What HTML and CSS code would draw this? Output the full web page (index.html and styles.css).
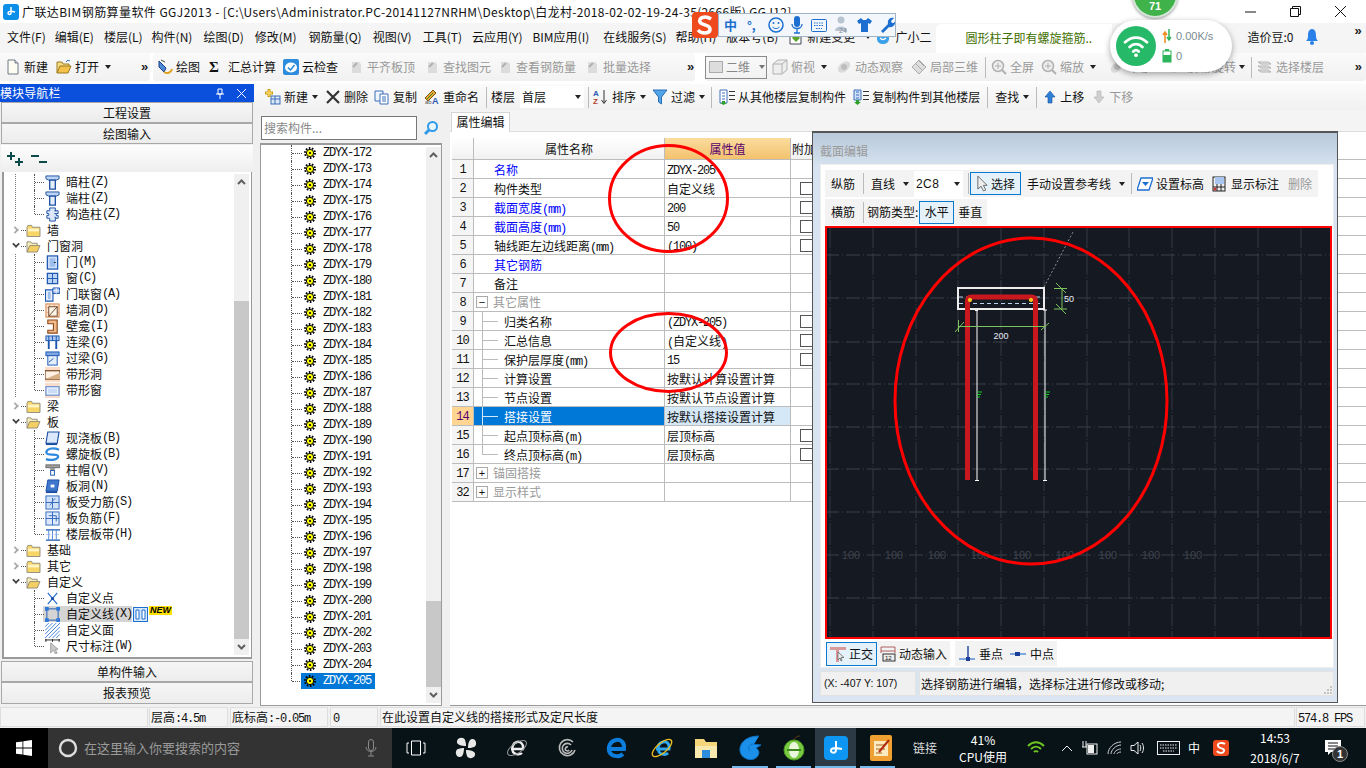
FILE: index.html
```html
<!DOCTYPE html>
<html lang="zh">
<head>
<meta charset="utf-8">
<title>广联达BIM钢筋算量软件</title>
<link rel="stylesheet" href="styles.css">
</head>
<body>
<svg class="defs" width="0" height="0">
<defs>
<symbol id="gear" viewBox="0 0 12 12"><circle cx="6" cy="6" r="5" fill="none" stroke="#000" stroke-width="2" stroke-dasharray="1.6 1.5"/><circle cx="6" cy="6" r="3.6" fill="#ff0" stroke="#000"/><circle cx="6" cy="6" r="1.1" fill="#000"/></symbol>
<symbol id="folder" viewBox="0 0 16 14"><path d="M1 3.5 2 1.5h4l1 2h8v10H1z" fill="#f7d668" stroke="#8f8a7c"/><path d="M2 5h12v3H2z" fill="#fdf3c3"/></symbol>
<symbol id="folderopen" viewBox="0 0 16 14"><path d="M1 13V2h4l1 1.5h6V6" fill="#fbeeb8" stroke="#8f8a7c"/><path d="M1 13 4 6h11l-3 7z" fill="#f5cf62" stroke="#8f8a7c"/></symbol>
<symbol id="tcol" viewBox="0 0 16 16"><path d="M1 1h14v3l-3 1.500H4L1 4z" fill="#bcd4f4" stroke="#1b4ea3"/><path d="M5 5.500h6V15H5z" fill="#e6f0fc" stroke="#1b4ea3" stroke-width="1.400"/></symbol>
<symbol id="gz" viewBox="0 0 16 16"><path d="M5 1h6v3h3v3h-2v2h2v3h-3v3H5v-3H2V9h2V7H2V4h3z" fill="#dce8fa" stroke="#1b4ea3"/><path d="M10 4h2M10 7h2M10 11h2" stroke="#1b4ea3"/></symbol>
<symbol id="door" viewBox="0 0 16 16"><rect x="2.500" y="1" width="11" height="14" fill="#cfe0f8" stroke="#1b55b0" stroke-width="1.300"/><rect x="5" y="3.500" width="6" height="9" fill="#9dbdec"/><path d="M9.500 8h2" stroke="#123"/></symbol>
<symbol id="win" viewBox="0 0 16 16"><rect x="2.500" y="2.500" width="11" height="11" fill="#bcd4f4" stroke="#1b55b0" stroke-width="1.300"/><path d="M8 2.500v11M2.500 8h11" stroke="#1b55b0"/></symbol>
<symbol id="doorwin" viewBox="0 0 16 16"><path d="M.5 3h8v12h-8z" fill="#eaf2fd" stroke="#1b55b0" stroke-width="1.200"/><path d="M8.500 1h7v6h-7z" fill="#a9c6f0" stroke="#1b55b0"/><path d="M12 1v6M8.500 4h7" stroke="#eef"/><rect x="3" y="5" width="3" height="8" fill="#9dbdec"/></symbol>
<symbol id="hole" viewBox="0 0 16 16"><rect x="1" y="1" width="14" height="14" fill="#fbe6d6" stroke="#d07c3c"/><path d="M1 5h14M1 10h14M5 1v14M10 1v14" stroke="#e8a97a"/><rect x="4" y="4" width="9" height="10" fill="#fdf4e8" stroke="#6b4423"/><path d="M4 14 13 4" stroke="#6b4423"/></symbol>
<symbol id="niche" viewBox="0 0 16 16"><path d="M3 1h10v14H3v-3h6V5H3z" fill="#f2b98a" stroke="#8a4a18" stroke-width="1.200"/></symbol>
<symbol id="ll" viewBox="0 0 16 16"><rect x="1" y="1" width="14" height="5" fill="#a9c6f0" stroke="#1b55b0"/><path d="M4 1v5M8 1v5M12 1v5" stroke="#1b55b0"/><path d="M4 6v9M12 6v9" stroke="#1b55b0" stroke-width="2"/></symbol>
<symbol id="gl" viewBox="0 0 16 16"><rect x="1" y="1" width="14" height="4" fill="#7ea8e4" stroke="#1b55b0"/><rect x="3" y="5" width="10" height="10" fill="#e4eefb" stroke="#1b55b0"/><path d="M4 12 9 8" stroke="#1b55b0"/></symbol>
<symbol id="dxd" viewBox="0 0 16 16"><rect width="16" height="16" fill="#fbdcc8"/><rect x="0" y="4" width="16" height="9" fill="#fff2e4" stroke="#6b3a14" stroke-width="1.200"/><path d="M0 13 16 6v7z" fill="#d8b088"/></symbol>
<symbol id="dxc" viewBox="0 0 16 16"><rect width="16" height="16" fill="#fbdcc8"/><rect x="1" y="4" width="14" height="9" fill="#f0f5ff" stroke="#5f8ad0" stroke-width="1.200"/><rect x="3" y="6" width="10" height="5" fill="#c9dcf8"/></symbol>
<symbol id="slab" viewBox="0 0 16 16"><path d="M3 1h12l-2 12H1z" fill="#dbe8fb" stroke="#1b4ea3" stroke-width="1.200"/><path d="M1 13h12v2H1z" fill="#1b4ea3"/></symbol>
<symbol id="spiral" viewBox="0 0 16 16"><path d="M15 3C8 0 1 2 1.500 6 2 10 14 6 14 10c0 3-7 5-13 3" fill="none" stroke="#2e8ae0" stroke-width="2.400"/></symbol>
<symbol id="cap" viewBox="0 0 16 16"><rect x="1" y="2" width="15" height="3" fill="#a0a0a0" stroke="#666"/><path d="M5 5h6l-1 3H6z" fill="#999"/><rect x="6" y="8" width="4" height="5" fill="#fff" stroke="#1b55b0"/></symbol>
<symbol id="bd" viewBox="0 0 16 16"><path d="M3 1h12l-2 12H1z" fill="#3f78cc" stroke="#1b4ea3"/><path d="M1 13h12v2H1z" fill="#1b4ea3"/><rect x="6" y="6" width="4" height="3" fill="#fff"/></symbol>
<symbol id="sl" viewBox="0 0 16 16"><rect x="1" y="1" width="14" height="14" fill="#cfe0f8" stroke="#2e66bc"/><path d="M1 8h14M8 3v11" stroke="#2e66bc"/><path d="M11 4C8 4 8 9 5 11" fill="none" stroke="#2e66bc"/></symbol>
<symbol id="fj" viewBox="0 0 16 16"><rect x="1" y="1" width="14" height="14" fill="#dde9fb" stroke="#2e66bc"/><path d="M1 8h14M8 1v14M4 5h8v6" fill="none" stroke="#2e66bc"/></symbol>
<symbol id="lc" viewBox="0 0 16 16"><path d="M1 3h15M1 14h15" stroke="#1b55b0" stroke-width="1.400"/><path d="M4 3v11M8 3v11M12 3v11" stroke="#4d86d6"/><path d="M1 8h15" stroke="#9dbdec" stroke-dasharray="2 1"/></symbol>
<symbol id="cdot" viewBox="0 0 16 16"><path d="M3 2 13 14M13 2 3 14" stroke="#2a6fd0" stroke-width="1.300"/><circle cx="8" cy="8" r="1.600" fill="#1b4ea3"/></symbol>
<symbol id="cline" viewBox="0 0 16 16"><rect x="2" y="2" width="12" height="12" fill="none" stroke="#1b55b0"/><path d="M0 0h4v4H0zM12 0h4v4h-4zM0 12h4v4H0zM12 12h4v4h-4z" fill="#2e78d8"/></symbol>
<symbol id="cface" viewBox="0 0 16 16"><path d="M0 4 4 0M0 8 8 0M0 12 12 0M0 16 16 0M4 16 16 4M8 16l8-8M12 16l4-4" stroke="#3d7fdc"/></symbol>
<symbol id="cdim" viewBox="0 0 16 16"><path d="M0 1h16M1 0v3M8 0v3M15 0v3" stroke="#222"/><path d="M6 4v11l3-3 2 4 2-1-2-4h3z" fill="#c8c8c8" stroke="#888" stroke-width=".7"/></symbol>
<symbol id="sp" viewBox="0 0 16 16"><path d="M4 3h7l2 2v9H4z" fill="#dcdcdc"/><path d="M5 8 9 4" stroke="#b0b0b0" stroke-width="2"/></symbol>
<symbol id="file" viewBox="0 0 16 16"><path d="M3 1h7l3 3v11H3z" fill="#fdfdf4" stroke="#707a86"/><path d="M10 1v3h3" fill="#dde" stroke="#707a86"/></symbol>
<symbol id="open" viewBox="0 0 16 16"><path d="M1 14V3h5l1 2h6v2" fill="#f8dc86" stroke="#9a7a22"/><path d="M1 14 4 7h11l-3 7z" fill="#f4c24a" stroke="#9a7a22"/><path d="M10 3c1-2 3-2 4-1" stroke="#2d6fbe" fill="none"/></symbol>
<symbol id="draw" viewBox="0 0 16 16"><path d="M2 2 9 9l-2 4-5-5z" fill="#4a8ad8" stroke="#1a3f80"/><path d="M7 13c3 2 7 1 8-3" fill="none" stroke="#e0a020" stroke-width="2"/><path d="M4 1l4 2" stroke="#444"/></symbol>
<symbol id="cloud" viewBox="0 0 16 16"><rect width="16" height="16" rx="2" fill="#2d8ddc"/><ellipse cx="8" cy="8.500" rx="6" ry="5" fill="#fff"/><path d="M5 8.500 7.500 11 11.500 6" fill="none" stroke="#2d8ddc" stroke-width="1.600"/></symbol>
<symbol id="combo" viewBox="0 0 16 16"><rect x="1.500" y="2.500" width="13" height="11" fill="#ddd" stroke="#aaa"/></symbol>
<symbol id="box3d" viewBox="0 0 16 16"><path d="M1 5 6 1h9v10l-5 4H1zM1 5h9v10M10 5l5-4" fill="#eee" stroke="#b0b0b0"/></symbol>
<symbol id="orb" viewBox="0 0 16 16"><ellipse cx="8" cy="8" rx="7" ry="4.500" transform="rotate(-40 8 8)" fill="#dadada"/><circle cx="8" cy="8" r="3" fill="#bdbdbd"/></symbol>
<symbol id="local" viewBox="0 0 16 16"><path d="M1 8 8 1l7 7-7 7z" fill="#ddd" stroke="#aaa"/><path d="M5 5l6 6M8 2l5 5" stroke="#aaa"/></symbol>
<symbol id="zoomf" viewBox="0 0 16 16"><circle cx="7" cy="7" r="5.500" fill="#eee" stroke="#b0b0b0" stroke-width="1.500"/><path d="M4 7h6M7 4v6" stroke="#b0b0b0"/><path d="M11 11l4 4" stroke="#b0b0b0" stroke-width="2"/></symbol>
<symbol id="layers" viewBox="0 0 16 16"><path d="M1 3h10l3 2H4zM1 7h10l3 2H4zM1 11h10l3 2H4z" fill="#ececec" stroke="#b0b0b0"/></symbol>
<symbol id="add" viewBox="0 0 16 16"><rect x="6" y="7" width="9" height="8" fill="#dce8f8" stroke="#3d6fb8"/><path d="M6 10h9M10 7v8" stroke="#3d6fb8"/><path d="M4 0v8M0 4h8" stroke="#c79a1a" stroke-width="3"/><path d="M4 1v6M1 4h6" stroke="#f6dc62" stroke-width="1.400"/></symbol>
<symbol id="copy" viewBox="0 0 16 16"><path d="M1 2h8v10H1z" fill="#eef4fd" stroke="#3d6fb8"/><path d="M6 5h8v10H6z" fill="#fff" stroke="#3d6fb8"/><path d="M8 8h4M8 10h4M8 12h4" stroke="#3d6fb8"/></symbol>
<symbol id="rename" viewBox="0 0 16 16"><path d="M1 9 9 1l3 3-8 8z" fill="#e6a832" stroke="#7a5510"/><path d="M3 10l6-6" stroke="#3a8a3a"/><text x="8" y="15" font-size="9" font-weight="700" fill="#2d5ab0" font-family="Liberation Sans">A</text><text x="1" y="15" font-size="6" fill="#555" font-family="Liberation Sans">ab</text></symbol>
<symbol id="sort" viewBox="0 0 16 16"><text x="0" y="7" font-size="8" font-weight="700" fill="#2d5ab0" font-family="Liberation Sans">A</text><text x="0" y="15" font-size="8" font-weight="700" fill="#b0402a" font-family="Liberation Sans">Z</text><path d="M11 1v13M8.500 11l2.500 3.500 2.500-3.500" fill="none" stroke="#333"/></symbol>
<symbol id="filter" viewBox="0 0 16 16"><path d="M1 1h14L9.500 8v7l-3-2V8z" fill="#52a4e8" stroke="#2a6fb4"/></symbol>
<symbol id="cp1" viewBox="0 0 16 16"><path d="M1 1h7v13H1z" fill="#fff" stroke="#3d6fb8"/><path d="M3 4h3M3 7h3M3 10h3" stroke="#3d6fb8"/><path d="M10 2h6v1h-6zM10 6h6v1h-6zM10 10h6v1h-6z" fill="#333"/><path d="M3 12h3v2h2l-3.500 2L1 14h2z" fill="#2ca02c"/></symbol>
<symbol id="cp2" viewBox="0 0 16 16"><path d="M1 1h7v10H1z" fill="#cfe0f8" stroke="#3d6fb8"/><path d="M3 3h3M3 6h3M3 9h3" stroke="#3d6fb8"/><path d="M10 2h6v1h-6zM10 6h6v1h-6zM10 10h6v1h-6z" fill="#333"/><path d="M3 11h3v2h2l-3.500 3L1 13h2z" fill="#2ca02c"/></symbol>
<symbol id="up" viewBox="0 0 14 14"><path d="M7 1 12 7H9v6H5V7H2z" fill="#2d7fd8" stroke="#1a4f9a" stroke-width=".6"/></symbol>
<symbol id="down" viewBox="0 0 14 14"><path d="M7 13 12 7H9V1H5v6H2z" fill="#d0d0d0" stroke="#b0b0b0" stroke-width=".6"/></symbol>
<symbol id="cursor" viewBox="0 0 14 18"><path d="M2 1v14l3.500-3 2.500 5 2.500-1-2.500-5H12z" fill="#eee" stroke="#666"/></symbol>
<symbol id="plane" viewBox="0 0 16 14"><path d="M4 1h12l-4 12H0z" fill="#fff" stroke="#1c6fd0" stroke-width="1.300"/><path d="M5 5h7l-3.500 4z" fill="#1c6fd0"/></symbol>
<symbol id="showdim" viewBox="0 0 14 16"><rect x="1" y="1" width="12" height="14" fill="#eee" stroke="#222"/><rect x="3" y="1" width="9" height="7" fill="#a9c6f0"/><path d="M1 11h12M5 8v7M9 8v7" stroke="#222"/><circle cx="3" cy="13" r="1.500" fill="#c33"/></symbol>
<symbol id="ortho" viewBox="0 0 18 18"><path d="M1 2h16v3H10v12H7V5H1z" fill="#d89a9a"/><path d="M9 7v8l2-2 1 3 1-.5-1-3h3z" fill="#eee" stroke="#555" stroke-width=".7"/></symbol>
<symbol id="dyn" viewBox="0 0 16 16"><path d="M1 1h14M1 1v6M15 1v6M1 5h14" fill="none" stroke="#b06060"/><rect x="3" y="8" width="12" height="7" fill="#eee" stroke="#333"/><text x="5" y="14" font-size="6" font-family="Liberation Sans" fill="#111">12</text></symbol>
<symbol id="perp" viewBox="0 0 18 18"><path d="M1 14h16" stroke="#7fa8dc" stroke-width="2"/><path d="M10 1v13" stroke="#1b3f9a" stroke-width="1.400"/><rect x="8" y="12" width="4" height="4" fill="#1b3f9a"/></symbol>
<symbol id="mid" viewBox="0 0 18 18"><path d="M1 9h16" stroke="#7fa8dc" stroke-width="2"/><rect x="6" y="7" width="5" height="4" fill="#1b3f9a"/></symbol>
</defs>
</svg>

<div class="app">
  <header class="title">
    <span class="applogo"><svg width="16" height="16" viewBox="0 0 16 16"><rect width="16" height="16" rx="3" fill="#0b8fe8"/><path d="M8 3v6c0 2-3 2-3 0s3-2 7-1" fill="none" stroke="#fff" stroke-width="1.500"/></svg></span>
    <span class="titletext"><span class="tt1">广联达BIM钢筋算量软件 GGJ2013 - </span><span class="tt2">[C:\Users\Administrator.PC-20141127NRHM\Desktop\白龙村-2018-02-02-19-24-35(2666版) GGJ12]</span></span>
    <span class="winbtns">
      <svg width="13" height="13" viewBox="0 0 13 13"><path d="M1 7h11" stroke="#111"/></svg>
      <svg width="13" height="13" viewBox="0 0 13 13"><path d="M1.500 3.500h8v8h-8zM3.500 3.500v-2h8v8h-2" fill="none" stroke="#111"/></svg>
      <svg width="13" height="13" viewBox="0 0 13 13"><path d="M1 1l11 11M12 1 1 12" stroke="#111"/></svg>
    </span>
  </header>

  <nav class="menu">
    <span class="r9">文件(F)</span><span>编辑(E)</span><span class="r9">楼层(L)</span><span class="r9">构件(N)</span><span class="mg r11">绘图(D)</span><span class="r12">修改(M)</span><span class="r11">钢筋量(Q)</span><span class="r11">视图(V)</span><span>工具(T)</span><span>云应用(Y)</span><span class="r14">BIM应用(I)</span><span class="r9">在线服务(S)</span><span>帮助(H)</span><span class="r9">版本号(B)</span>
    <span class="mitem"><svg width="16" height="16" viewBox="0 0 16 16"><path d="M3 1h8l3 3v11H3z" fill="#fff" stroke="#445"/><path d="M5 9l4-4 4 4-4 4z" fill="#5aa52a"/></svg>新建变更</span>
    <span class="mdd dd"></span>
    <span class="mitem xr"><svg width="16" height="16" viewBox="0 0 16 16"><path d="M2 3c4 1 8 1 12 0v7c0 3-3 5-6 5s-6-2-6-5z" fill="#3aa0ea"/><path d="M5 9c2 2 4 2 6 0" stroke="#fff" stroke-width="1.500" fill="none"/></svg>广小二</span>
    <div class="newsbar"><span class="news">圆形柱子即有螺旋箍筋..</span></div>
    <span class="bean">造价豆:0</span>
    <svg class="bell" width="12" height="18" viewBox="0 0 12 18"><path d="M6 1C3 1 2 4 2 8c0 3-1 4-2 5h12c-1-1-2-2-2-5 0-4-1-7-4-7z" fill="#2a7fe8"/><circle cx="6" cy="15" r="2" fill="#2a7fe8"/></svg>
    <span class="more topmore">»</span>
  </nav>

  <div class="tb1">
    <div class="grp g1">
      <span class="ti"><svg class="i"><use href="#file"/></svg>新建</span>
      <span class="ti m8"><svg class="i"><use href="#open"/></svg>打开</span>
      <span class="dd m6"></span>
      <span class="more m30">»</span>
    </div>
    <div class="grp g2">
      <span class="ti"><svg class="i"><use href="#draw"/></svg>绘图</span>
      <span class="sigma">Σ</span><span class="ti m9">汇总计算</span>
      <span class="ti m7"><svg class="i"><use href="#cloud"/></svg>云检查</span>
      <span class="ti m10 off"><svg class="i"><use href="#sp"/></svg>平齐板顶</span>
      <span class="ti m9 off"><svg class="i"><use href="#sp"/></svg>查找图元</span>
      <span class="ti m6 off"><svg class="i"><use href="#sp"/></svg>查看钢筋量</span>
      <span class="ti m8 off"><svg class="i"><use href="#sp"/></svg>批量选择</span>
      <span class="more m36">»</span>
    </div>
    <div class="grp g3">
      <span class="combo"><svg class="i"><use href="#combo"/></svg>二维<i class="dd"></i></span>
      <span class="ti m5 off"><svg class="i"><use href="#box3d"/></svg>俯视</span><span class="dd m6"></span>
      <span class="ti m9 off"><svg class="i"><use href="#orb"/></svg>动态观察</span>
      <span class="ti m8 off"><svg class="i"><use href="#local"/></svg>局部三维</span>
      <span class="sep m7"></span>
      <span class="ti m5 off"><svg class="i"><use href="#zoomf"/></svg>全屏</span>
      <span class="ti m7 off"><svg class="i"><use href="#zoomf"/></svg>缩放</span><span class="dd m6"></span>
      <span class="ti m13 off"><svg class="i"><use href="#orb"/></svg>平移</span>
      <span class="ti m17 off"><svg class="i"><use href="#orb"/></svg>屏幕旋转</span><span class="dd m3"></span>
      <span class="sep m6"></span>
      <span class="ti m5 off"><svg class="i"><use href="#layers"/></svg>选择楼层</span>
      <span class="more mauto">»</span>
    </div>
  </div>

  <div class="work">
    <aside class="nav">
      <div class="navhead"><span>模块导航栏</span><span class="navctl">
        <svg width="10" height="11" viewBox="0 0 10 11"><path d="M3 1h4v5H3zM1 6h8M5 6v5" fill="none" stroke="#fff"/></svg>
        <svg width="9" height="9" viewBox="0 0 9 9"><path d="M0 0l9 9M9 0 0 9" stroke="#fff"/></svg></span></div>
      <div class="navbtn">工程设置</div>
      <div class="navbtn">绘图输入</div>
      <div class="navtools">
        <svg width="20" height="16" viewBox="0 0 20 16"><path d="M5 1v8M1 5h8M13 7v8M9 11h8" stroke="#0a4a4a" stroke-width="2"/></svg>
        <svg class="minus" width="20" height="16" viewBox="0 0 20 16"><path d="M1 5h8M9 11h8" stroke="#0a4a4a" stroke-width="2"/></svg>
      </div>
      <div class="navtree">
        <div class="rows">
          <div class="leaf anc"><svg class="li"><use href="#tcol"/></svg>暗柱<b>(Z)</b></div>
          <div class="leaf anc"><svg class="li"><use href="#tcol"/></svg>端柱<b>(Z)</b></div>
          <div class="leaf anc last"><svg class="li"><use href="#gz"/></svg>构造柱<b>(Z)</b></div>
          <div class="fold"><i class="chev"></i><svg class="fi"><use href="#folder"/></svg>墙</div>
          <div class="fold open"><i class="chev"></i><svg class="fi"><use href="#folderopen"/></svg>门窗洞</div>
          <div class="leaf anc"><svg class="li"><use href="#door"/></svg>门<b>(M)</b></div>
          <div class="leaf anc"><svg class="li"><use href="#win"/></svg>窗<b>(C)</b></div>
          <div class="leaf anc"><svg class="li"><use href="#doorwin"/></svg>门联窗<b>(A)</b></div>
          <div class="leaf anc"><svg class="li"><use href="#hole"/></svg>墙洞<b>(D)</b></div>
          <div class="leaf anc"><svg class="li"><use href="#niche"/></svg>壁龛<b>(I)</b></div>
          <div class="leaf anc"><svg class="li"><use href="#ll"/></svg>连梁<b>(G)</b></div>
          <div class="leaf anc"><svg class="li"><use href="#gl"/></svg>过梁<b>(G)</b></div>
          <div class="leaf anc"><svg class="li"><use href="#dxd"/></svg>带形洞</div>
          <div class="leaf anc last"><svg class="li"><use href="#dxc"/></svg>带形窗</div>
          <div class="fold"><i class="chev"></i><svg class="fi"><use href="#folder"/></svg>梁</div>
          <div class="fold open"><i class="chev"></i><svg class="fi"><use href="#folderopen"/></svg>板</div>
          <div class="leaf anc"><svg class="li"><use href="#slab"/></svg>现浇板<b>(B)</b></div>
          <div class="leaf anc"><svg class="li"><use href="#spiral"/></svg>螺旋板<b>(B)</b></div>
          <div class="leaf anc"><svg class="li"><use href="#cap"/></svg>柱帽<b>(V)</b></div>
          <div class="leaf anc"><svg class="li"><use href="#bd"/></svg>板洞<b>(N)</b></div>
          <div class="leaf anc"><svg class="li"><use href="#sl"/></svg>板受力筋<b>(S)</b></div>
          <div class="leaf anc"><svg class="li"><use href="#fj"/></svg>板负筋<b>(F)</b></div>
          <div class="leaf anc last"><svg class="li"><use href="#lc"/></svg>楼层板带<b>(H)</b></div>
          <div class="fold"><i class="chev"></i><svg class="fi"><use href="#folder"/></svg>基础</div>
          <div class="fold"><i class="chev"></i><svg class="fi"><use href="#folder"/></svg>其它</div>
          <div class="fold open"><i class="chev"></i><svg class="fi"><use href="#folderopen"/></svg>自定义</div>
          <div class="leaf"><svg class="li"><use href="#cdot"/></svg>自定义点</div>
          <div class="leaf cur"><svg class="li"><use href="#cline"/></svg>自定义线<b>(X)</b>
            <svg class="newico" width="15" height="15" viewBox="0 0 15 15"><rect x=".5" y=".5" width="14" height="14" fill="#d8e8fb" stroke="#1c6fd0"/><path d="M3 3h3v9H3zM9 3h3v9H9z" fill="#fff" stroke="#1c6fd0"/></svg><em class="newtag">NEW</em></div>
          <div class="leaf"><svg class="li"><use href="#cface"/></svg>自定义面</div>
          <div class="leaf last"><svg class="li"><use href="#cdim"/></svg>尺寸标注<b>(W)</b></div>
        </div>
        <div class="scroll sb1">
          <svg class="sarrow" width="15" height="16" viewBox="0 0 15 16"><path d="M4 10l3.500-3.500L11 10" fill="none" stroke="#606060" stroke-width="2"/></svg>
          <div class="strack"><div class="sthumb"></div></div>
          <svg class="sarrow" width="15" height="16" viewBox="0 0 15 16"><path d="M4 6l3.500 3.500L11 6" fill="none" stroke="#606060" stroke-width="2"/></svg>
        </div>
      </div>
      <div class="navbtn b1">单构件输入</div>
      <div class="navbtn b2">报表预览</div>
    </aside>

    <section class="content">
      <div class="tb2">
        <span class="ti"><svg class="i"><use href="#add"/></svg>新建</span><span class="dd m4"></span>
        <span class="ti m7"><svg class="i" viewBox="0 0 16 16"><path d="M2 2l12 12M14 2 2 14" stroke="#333" stroke-width="2.200"/></svg>删除</span>
        <span class="ti m6"><svg class="i"><use href="#copy"/></svg>复制</span>
        <span class="ti m7"><svg class="i"><use href="#rename"/></svg>重命名</span>
        <span class="sep m7"></span><span class="m4">楼层</span>
        <span class="select"><span>首层</span><i class="dd"></i></span>
        <span class="sep m4"></span>
        <span class="ti m4"><svg class="i"><use href="#sort"/></svg>排序</span><span class="dd m4"></span>
        <span class="ti m6"><svg class="i"><use href="#filter"/></svg>过滤</span><span class="dd m4"></span>
        <span class="sep m6"></span>
        <span class="ti m7"><svg class="i"><use href="#cp1"/></svg>从其他楼层复制构件</span>
        <span class="ti m7"><svg class="i"><use href="#cp2"/></svg>复制构件到其他楼层</span>
        <span class="sep m7"></span><span class="m7">查找</span><span class="dd m4"></span>
        <span class="sep m7"></span>
        <span class="ti m6"><svg class="ib"><use href="#up"/></svg>上移</span>
        <span class="ti m8 off"><svg class="ib"><use href="#down"/></svg>下移</span>
      </div>
      <div class="panels">
        <div class="list">
          <div class="search"><span class="sinput">搜索构件...</span>
            <svg width="16" height="16" viewBox="0 0 16 16"><circle cx="9.500" cy="6.500" r="4.500" fill="#eaf6ff" stroke="#2f9be8" stroke-width="2"/><path d="M6 10l-4 4" stroke="#2f9be8" stroke-width="3"/></svg></div>
          <div class="listbox">
            <div class="rows2">
              <div class="z"><svg class="g"><use href="#gear"/></svg>ZDYX-172</div>
              <div class="z"><svg class="g"><use href="#gear"/></svg>ZDYX-173</div>
              <div class="z"><svg class="g"><use href="#gear"/></svg>ZDYX-174</div>
              <div class="z"><svg class="g"><use href="#gear"/></svg>ZDYX-175</div>
              <div class="z"><svg class="g"><use href="#gear"/></svg>ZDYX-176</div>
              <div class="z"><svg class="g"><use href="#gear"/></svg>ZDYX-177</div>
              <div class="z"><svg class="g"><use href="#gear"/></svg>ZDYX-178</div>
              <div class="z"><svg class="g"><use href="#gear"/></svg>ZDYX-179</div>
              <div class="z"><svg class="g"><use href="#gear"/></svg>ZDYX-180</div>
              <div class="z"><svg class="g"><use href="#gear"/></svg>ZDYX-181</div>
              <div class="z"><svg class="g"><use href="#gear"/></svg>ZDYX-182</div>
              <div class="z"><svg class="g"><use href="#gear"/></svg>ZDYX-183</div>
              <div class="z"><svg class="g"><use href="#gear"/></svg>ZDYX-184</div>
              <div class="z"><svg class="g"><use href="#gear"/></svg>ZDYX-185</div>
              <div class="z"><svg class="g"><use href="#gear"/></svg>ZDYX-186</div>
              <div class="z"><svg class="g"><use href="#gear"/></svg>ZDYX-187</div>
              <div class="z"><svg class="g"><use href="#gear"/></svg>ZDYX-188</div>
              <div class="z"><svg class="g"><use href="#gear"/></svg>ZDYX-189</div>
              <div class="z"><svg class="g"><use href="#gear"/></svg>ZDYX-190</div>
              <div class="z"><svg class="g"><use href="#gear"/></svg>ZDYX-191</div>
              <div class="z"><svg class="g"><use href="#gear"/></svg>ZDYX-192</div>
              <div class="z"><svg class="g"><use href="#gear"/></svg>ZDYX-193</div>
              <div class="z"><svg class="g"><use href="#gear"/></svg>ZDYX-194</div>
              <div class="z"><svg class="g"><use href="#gear"/></svg>ZDYX-195</div>
              <div class="z"><svg class="g"><use href="#gear"/></svg>ZDYX-196</div>
              <div class="z"><svg class="g"><use href="#gear"/></svg>ZDYX-197</div>
              <div class="z"><svg class="g"><use href="#gear"/></svg>ZDYX-198</div>
              <div class="z"><svg class="g"><use href="#gear"/></svg>ZDYX-199</div>
              <div class="z"><svg class="g"><use href="#gear"/></svg>ZDYX-200</div>
              <div class="z"><svg class="g"><use href="#gear"/></svg>ZDYX-201</div>
              <div class="z"><svg class="g"><use href="#gear"/></svg>ZDYX-202</div>
              <div class="z"><svg class="g"><use href="#gear"/></svg>ZDYX-203</div>
              <div class="z"><svg class="g"><use href="#gear"/></svg>ZDYX-204</div>
              <div class="z zsel"><svg class="g"><use href="#gear"/></svg><span>ZDYX-205</span></div>
            </div>
            <div class="scroll sb2">
              <svg class="sarrow" width="15" height="16" viewBox="0 0 15 16"><path d="M4 10l3.500-3.500L11 10" fill="none" stroke="#606060" stroke-width="2"/></svg>
              <div class="strack"><div class="sthumb"></div></div>
              <svg class="sarrow" width="15" height="16" viewBox="0 0 15 16"><path d="M4 6l3.500 3.500L11 6" fill="none" stroke="#606060" stroke-width="2"/></svg>
            </div>
          </div>
        </div>
        <div class="props">
          <div class="tabs"><span class="tab">属性编辑</span></div>
          <div class="grid">
            <div class="row head"><span class="n"></span><span class="c1 ctr">属性名称</span><span class="c2 hv">属性值</span><span class="c3 cut">附加</span></div>
            <div class="row"><span class="n">1</span><span class="c1 blue">名称</span><span class="c2 mono">ZDYX-205</span><span class="c3"></span></div>
            <div class="row"><span class="n">2</span><span class="c1">构件类型</span><span class="c2">自定义线</span><span class="c3"><i class="cb"></i></span></div>
            <div class="row"><span class="n">3</span><span class="c1 blue">截面宽度<b>(mm)</b></span><span class="c2 mono">200</span><span class="c3"><i class="cb"></i></span></div>
            <div class="row"><span class="n">4</span><span class="c1 blue">截面高度<b>(mm)</b></span><span class="c2 mono">50</span><span class="c3"><i class="cb"></i></span></div>
            <div class="row"><span class="n">5</span><span class="c1">轴线距左边线距离<b>(mm)</b></span><span class="c2 mono">(100)</span><span class="c3"><i class="cb"></i></span></div>
            <div class="row"><span class="n">6</span><span class="c1 blue">其它钢筋</span><span class="c2"></span><span class="c3"></span></div>
            <div class="row"><span class="n">7</span><span class="c1">备注</span><span class="c2"></span><span class="c3"></span></div>
            <div class="row"><span class="n">8</span><span class="c1 grp1 gray"><i class="tog">−</i>其它属性</span><span class="c2"></span><span class="c3"></span></div>
            <div class="row"><span class="n">9</span><span class="c1 sub">归类名称</span><span class="c2 mono">(ZDYX-205)</span><span class="c3"><i class="cb"></i></span></div>
            <div class="row"><span class="n">10</span><span class="c1 sub">汇总信息</span><span class="c2"><b>(</b>自定义线<b>)</b></span><span class="c3"><i class="cb"></i></span></div>
            <div class="row"><span class="n">11</span><span class="c1 sub">保护层厚度<b>(mm)</b></span><span class="c2 mono">15</span><span class="c3"><i class="cb"></i></span></div>
            <div class="row"><span class="n">12</span><span class="c1 sub">计算设置</span><span class="c2">按默认计算设置计算</span><span class="c3"></span></div>
            <div class="row"><span class="n">13</span><span class="c1 sub">节点设置</span><span class="c2">按默认节点设置计算</span><span class="c3"></span></div>
            <div class="row sel"><span class="n">14</span><span class="c1 sub">搭接设置</span><span class="c2">按默认搭接设置计算</span><span class="c3"></span></div>
            <div class="row"><span class="n">15</span><span class="c1 sub">起点顶标高<b>(m)</b></span><span class="c2">层顶标高</span><span class="c3"><i class="cb"></i></span></div>
            <div class="row"><span class="n">16</span><span class="c1 sub endsub">终点顶标高<b>(m)</b></span><span class="c2">层顶标高</span><span class="c3"><i class="cb"></i></span></div>
            <div class="row"><span class="n">17</span><span class="c1 grp1 gray"><i class="tog">+</i>锚固搭接</span><span class="c2"></span><span class="c3"></span></div>
            <div class="row"><span class="n">32</span><span class="c1 grp1 gray"><i class="tog">+</i>显示样式</span><span class="c2"></span><span class="c3"></span></div>
          </div>
        </div>
      </div>
    </section>
  </div>

  <footer class="status">
    <span class="sc s0"></span><span class="sc s1">层高<b>:4.5m</b></span><span class="sc s2">底标高<b>:-0.05m</b></span><span class="sc s3"><b>0</b></span><span class="sc s4">在此设置自定义线的搭接形式及定尺长度</span><span class="sc s5"><b>574.8 FPS</b></span>
  </footer>

  <div class="taskbar">
    <span class="start"><svg width="16" height="16" viewBox="0 0 16 16"><path d="M0 2.300 6.500 1.400V7.600H0zM7.300 1.300 16 0V7.600H7.300zM0 8.400H6.500V14.600L0 13.700zM7.300 8.400H16V16L7.300 14.700z" fill="#fff"/></svg></span>
    <span class="tsearch"><svg width="20" height="20" viewBox="0 0 20 20"><circle cx="10" cy="10" r="8" fill="none" stroke="#ddd" stroke-width="2.400"/></svg><span class="tstext">在这里输入你要搜索的内容</span>
      <svg class="tmic" width="12" height="18" viewBox="0 0 12 18"><rect x="3.500" y=".5" width="5" height="11" rx="2.500" fill="none" stroke="#8a8a8a"/><path d="M1 8c0 6 10 6 10 0M6 13v4M3 17h6" fill="none" stroke="#8a8a8a"/></svg></span>
    <span class="tk w48"><svg width="20" height="16" viewBox="0 0 20 16"><path d="M5.500 1h9v14h-9zM3 3H1v10h2M17 3h2v10h-2" fill="none" stroke="#fff"/></svg></span>
    <span class="tk w51"><svg width="22" height="22" viewBox="0 0 22 22"><circle cx="11" cy="11" r="3" fill="#0b1318"/><path d="M11 9C7 9 1 8 2 4s7-4 8-1 1 4 1 6zM13 11c0-4 1-10 5-9s4 7 1 8-4 1-6 1zM11 13c4 0 10 1 9 5s-7 4-8 1-1-4-1-6zM9 11c0 4-1 10-5 9s-4-7-1-8 4-1 6-1z" fill="#e8e8e8"/></svg></span>
    <span class="tk w51"><svg width="24" height="26" viewBox="0 0 24 26"><path d="M6 14h12c1-5-3-8-6-7-4 1-6 6-4 10 2 3 7 3 9 1" fill="none" stroke="#eee" stroke-width="2.400"/><ellipse cx="12" cy="13" rx="11" ry="5" transform="rotate(-35 12 13)" fill="none" stroke="#999"/></svg></span>
    <span class="tk w50"><svg width="20" height="20" viewBox="0 0 20 20"><path d="M16 4A8 8 0 1 0 18 12M14 7a5 5 0 1 0 1 5M11 9a2 2 0 1 0 1 3" fill="none" stroke="#bbb" stroke-width="1.600"/></svg></span>
    <span class="tk w48"><svg width="22" height="24" viewBox="0 0 22 24"><path d="M4 13h15c1-7-4-10-8-9-6 1-9 8-6 13 3 4 10 4 13 1" fill="none" stroke="#0d7ddc" stroke-width="4"/></svg></span>
    <span class="tk w44"><svg width="26" height="28" viewBox="0 0 26 28"><path d="M7 15h13c1-6-3-8-6-7-5 1-6 7-4 10 2 3 7 3 9 1" fill="none" stroke="#2ea7ee" stroke-width="3"/><ellipse cx="13" cy="14" rx="12" ry="5" transform="rotate(-40 13 14)" fill="none" stroke="#f0c020" stroke-width="1.300"/></svg></span>
    <span class="tk w44"><svg width="24" height="22" viewBox="0 0 24 22"><path d="M1 2h9l2 3h11v16H1z" fill="#f5d57a"/><rect x="1" y="9" width="22" height="12" fill="#fae9ae"/><rect x="8" y="13" width="8" height="8" fill="#2d8ddc"/></svg></span>
    <span class="tk w44 under"><svg width="26" height="28" viewBox="0 0 26 28"><path d="M22 2C8 2 2 10 3 17c1 7 9 10 14 8 5-2 7-8 2-11l5-3-9-1c-4 2-4 5-2 7" fill="#1a90ea" stroke="#0d6fc0"/></svg></span>
    <span class="tk w43 under"><svg width="24" height="28" viewBox="0 0 24 28"><circle cx="12" cy="16" r="10" fill="#7ac943" stroke="#4c9a20"/><ellipse cx="12" cy="16" rx="5" ry="8" fill="#eaf7dc"/><path d="M5 16h14" stroke="#3d8a1c" stroke-width="2"/><path d="M12 6c1-3 3-4 6-4" stroke="#5a3a10" fill="none"/></svg></span>
    <span class="tk w41 active under"><svg width="24" height="24" viewBox="0 0 24 24"><rect width="24" height="24" rx="4" fill="#0d96f2"/><path d="M12 5v9c0 4-6 3-5 0s6-2 11-1" fill="none" stroke="#fff" stroke-width="2"/></svg></span>
    <span class="tk w45 under short"><svg width="24" height="28" viewBox="0 0 24 28"><rect x="1" y="1" width="22" height="26" rx="2" fill="#f0a030"/><path d="M5 7h14v15H5z" fill="#fbe9c0"/><path d="M7 11h9M7 15h9M7 19h6" stroke="#a5661a"/><path d="M10 18 20 6" stroke="#b02a10" stroke-width="2"/></svg></span>
    <span class="tlabel">链接</span>
    <span class="tcpu"><span>41%</span><span>CPU使用</span></span>
    <span class="tray">
      <svg class="t1" width="18" height="14" viewBox="0 0 18 14"><path d="M1 5c5-5 11-5 16 0M4 8c3-3 7-3 10 0M7 11c1-1 3-1 4 0" fill="none" stroke="#6ec622" stroke-width="2"/></svg>
      <svg class="t2" width="12" height="8" viewBox="0 0 12 8"><path d="M1 7l5-5 5 5" fill="none" stroke="#eee"/></svg>
      <svg class="t3" width="16" height="14" viewBox="0 0 16 14"><rect x="5" y="3" width="10" height="10" fill="none" stroke="#eee"/><rect x="6" y="4" width="6" height="8" fill="#eee"/><path d="M1 0v6M4 0v6M0 6h5" stroke="#eee"/></svg>
      <svg class="t4" width="16" height="14" viewBox="0 0 16 14"><path d="M1 13C1 7 7 1 14 1M4 13C4 9 9 4 14 4M7 13c0-2 3-5 7-5M10 13c0-1 2-2 4-2" fill="none" stroke="#ccc"/></svg>
      <svg class="t5" width="15" height="14" viewBox="0 0 15 14"><path d="M1 4.500h3L8 1v12L4 9.500H1z" fill="none" stroke="#eee"/><path d="M10 4c1 2 1 4 0 6M12 2c2 3 2 7 0 10" fill="none" stroke="#eee"/></svg>
      <svg class="t6" width="23" height="14" viewBox="0 0 23 14"><rect x=".5" y=".5" width="22" height="13" fill="none" stroke="#eee"/><path d="M3 4h17M3 7h17M6 10h11" stroke="#eee" stroke-dasharray="1.500 1"/></svg>
      <span class="t7">中</span>
      <svg class="t8" width="16" height="18" viewBox="0 0 16 18"><rect y="1" width="16" height="16" rx="3" fill="#ef4a1e"/><path d="M12 5C9 3 4 4 5 7s7 2 6 5-6 2-7 0" fill="none" stroke="#fff" stroke-width="2"/></svg>
    </span>
    <span class="clock"><span>14:53</span><span>2018/6/7</span></span>
    <span class="notify"><svg width="16" height="16" viewBox="0 0 16 16"><path d="M0 0h16v12H6l-3 3v-3H0z" fill="#fff"/><path d="M3 3h10M3 6h10M3 9h7" stroke="#0b1318"/></svg><em class="ncount">1</em></span>
  </div>

  <!-- floating dialog -->
  <div class="dlg">
    <div class="dlgtitle">截面编辑</div>
    <div class="dlgbody">
      <div class="dtb d1">
        <span>纵筋</span><span class="sep m8"></span><span class="m7">直线</span><span class="dd m8"></span>
        <span class="dsel"><span>2C8</span><i class="dd"></i></span>
        <span class="sep m5"></span>
        <span class="tog2 sel2"><svg class="cur2"><use href="#cursor"/></svg>选择</span>
        <span class="m6">手动设置参考线</span><span class="dd m8"></span><span class="sep m6"></span>
        <span class="ti m5"><svg class="i"><use href="#plane"/></svg>设置标高</span>
        <span class="ti m8 g5"><svg class="ib"><use href="#showdim"/></svg>显示标注</span>
        <span class="m9 off">删除</span>
      </div>
      <div class="dtb d2">
        <span>横筋</span><span class="sep m8"></span><span class="m3">钢筋类型:</span>
        <span class="tog2 plain">水平</span><span class="m4">垂直</span>
      </div>
      <div class="canvas">
        <svg class="draw" viewBox="827 228 503 409" width="503" height="409">
          <rect x="827" y="228" width="503" height="409" fill="#151922"/>
          <path d="M830 226v411M873 226v411M916 226v411M958 226v411M1001 226v411M1044 226v411M1087 226v411M1129 226v411M1172 226v411M1215 226v411M1258 226v411M1301 226v411" stroke="#323944" stroke-dasharray="22 2 1 2"/>
          <path d="M825 255h505M825 298h505M825 342h505M825 384h505M825 427h505M825 469h505M825 512h505M825 555h505M825 598h505" stroke="#3a404b" stroke-dasharray="14 3 1 3"/>
          <path d="M1044 287 1073 232" stroke="#8a8f96" stroke-dasharray="2 2"/>
          <g class="hund"><text x="851" y="559">100</text><text x="894" y="559">100</text><text x="937" y="559">100</text><text x="980" y="559">100</text><text x="1022" y="559">100</text><text x="1065" y="559">100</text><text x="1108" y="559">100</text><text x="1151" y="559">100</text><text x="1193" y="559">100</text></g>
          <rect x="958" y="288" width="86" height="21" fill="none" stroke="#ececec" stroke-width="2"/>
          <path d="M959 297h84M959 303.500h84" stroke="#b8d4f0" stroke-dasharray="4 3"/>
          <path d="M967.500 480V301q0-4 4-4h60q4 0 4 4V480" fill="none" stroke="#c8181e" stroke-width="5"/>
          <circle cx="970" cy="300" r="1.700" fill="#f0c020" stroke="#f0c020"/><circle cx="1031" cy="300" r="1.700" fill="#f0c020" stroke="#f0c020"/>
          <path d="M977 310V480M1045 310V480M975 480.500h4M1043 480.500h4M975 310.500h3M1043 310h4" stroke="#fff"/>
          <path d="M977 392h5M977 394.500h4M977 397h3M1045 392h5M1045 394.500h4M1045 397h3" stroke="#18d028"/>
          <path d="M958 326.500h87M958.500 320v12M955 332l9-10M1041 330l8-7M1062 288v21M1054 288.500h13M1054 309h13M1056 283l10 10M1056 304l10 10" stroke="#7cc35e" fill="none"/>
          <text class="dimt" x="1001" y="339">200</text><text class="dimt" x="1069" y="302">50</text>
        </svg>
      </div>
      <div class="dfoot">
        <span class="tog2 or"><svg class="i18"><use href="#ortho"/></svg>正交</span>
        <span class="dti"><svg class="i"><use href="#dyn"/></svg>动态输入</span>
        <span class="dti m5"><svg class="i18"><use href="#perp"/></svg>垂点</span>
        <span class="dti"><svg class="i18"><use href="#mid"/></svg>中点</span>
      </div>
    </div>
    <div class="dstatus"><span class="ds1">(X: -407 Y: 107)</span><span class="ds2">选择钢筋进行编辑，选择标注进行修改或移动;<svg class="grip" width="9" height="9" viewBox="0 0 9 9"><path d="M7 1h2v2H7zM4 4h2v2H4zM7 4h2v2H7zM1 7h2v2H1zM4 7h2v2H4zM7 7h2v2H7z" fill="#c4c4c4"/></svg></span></div>
  </div>

  <!-- hand-drawn markup over the screenshot -->
  <svg class="markup" width="1366" height="768" viewBox="0 0 1366 768">
    <ellipse cx="668.500" cy="198.500" rx="59" ry="53" fill="none" stroke="#f00" stroke-width="3"/>
    <ellipse cx="668.500" cy="352.500" rx="58" ry="39" fill="none" stroke="#f00" stroke-width="3"/>
    <ellipse cx="1031" cy="401" rx="136" ry="163" fill="none" stroke="#f00" stroke-width="3"/>
  </svg>

  <!-- Sogou IME floating bar -->
  <div class="sogou">
    <svg class="sglogo" width="26" height="26" viewBox="0 0 26 26"><rect width="26" height="26" rx="4" fill="#ef4a1e"/><path d="M19 7C13 3 6 6 8 10c2 4 11 2 10 8-1 4-9 4-12 0" fill="none" stroke="#fff" stroke-width="3.500"/></svg>
    <div class="sgbar">
      <span class="sgz">中</span><span class="sgd">°,</span>
      <svg width="16" height="16" viewBox="0 0 16 16"><circle cx="8" cy="8" r="7" fill="none" stroke="#1c6fd0" stroke-width="1.500"/><circle cx="5.500" cy="6" r="1" fill="#1c6fd0"/><circle cx="10.500" cy="6" r="1" fill="#1c6fd0"/><path d="M4.500 10c2 2 5 2 7 0" fill="none" stroke="#1c6fd0"/></svg>
      <svg width="12" height="18" viewBox="0 0 12 18"><rect x="3" y="0" width="6" height="11" rx="3" fill="#1c6fd0"/><path d="M1 8c0 6 10 6 10 0M6 13v4M3 17h6" fill="none" stroke="#1c6fd0" stroke-width="1.300"/></svg>
      <svg width="16" height="13" viewBox="0 0 16 13"><rect x=".5" y=".5" width="15" height="12" rx="1" fill="none" stroke="#1c6fd0"/><path d="M3 4h10M3 6.500h10M5 9.500h6" stroke="#1c6fd0" stroke-dasharray="1.500 1"/></svg>
      <svg width="15" height="18" viewBox="0 0 15 18"><circle cx="7" cy="4" r="3.500" fill="#b8c4d0"/><path d="M1 15c0-6 12-6 12 0z" fill="#b8c4d0"/><text x="5" y="16.500" font-size="7" font-family="Liberation Sans" fill="#7a8896">24</text></svg>
      <svg width="15" height="14" viewBox="0 0 15 14"><path d="M4 0 0 3l2 3 2-1v9h7V5l2 1 2-3-4-3-2 2H6z" fill="#1c6fd0"/></svg>
      <svg width="16" height="16" viewBox="0 0 16 16"><path d="M2 14 9 7C8 3 11 0 15 1l-3 3 1 2 2 0 1-2c1 4-3 7-6 6l-6 6z" fill="#1c6fd0"/></svg>
    </div>
  </div>

  <!-- network speed widget -->
  <div class="ball">71</div>
  <div class="netw">
    <span class="wifi"><svg width="26" height="22" viewBox="0 0 28 24"><path d="M2 8c7-7 17-7 24 0M7 13c4-4 10-4 14 0M11 18c2-2 4-2 6 0" fill="none" stroke="#fff" stroke-width="3" stroke-linecap="round"/><circle cx="14" cy="22" r="2" fill="#fff"/></svg></span>
    <div class="netinfo">
      <span class="nrow"><svg width="10" height="14" viewBox="0 0 10 14"><path d="M3 14V4M1 6l2-3 2 3" fill="none" stroke="#f08a1c" stroke-width="1.500"/><path d="M7 0v10M5 8l2 3 2-3" fill="none" stroke="#2cb55a" stroke-width="1.500"/></svg>0.00K/s</span>
      <span class="nrow"><svg width="10" height="14" viewBox="0 0 10 14"><rect x="1" y="2" width="8" height="11" fill="#fff" stroke="#2cb55a"/><rect x="1" y="6" width="8" height="7" fill="#2cb55a"/><rect x="3" y="0" width="4" height="2" fill="#2cb55a"/></svg>0</span>
    </div>
  </div>
</div>
</body>
</html>
```
FILE: styles.css
```css
* { box-sizing: border-box; }
html, body { margin: 0; padding: 0; }
body { width: 1366px; height: 768px; overflow: hidden; font: 12px/16px "Noto Sans CJK SC", "Liberation Sans", sans-serif; color: #111; background: #f0f0f0; }
.defs { position: absolute; }
svg { display: block; flex: none; }
.app { position: relative; width: 1366px; height: 768px; display: flex; flex-direction: column; overflow: hidden; }

/* title */
.title { height: 23px; background: #fff; display: flex; align-items: center; padding-left: 3px; flex: none; }
.applogo { width: 19px; }
.titletext { font-size: 12px; white-space: nowrap; }
.tt1 { letter-spacing: .43px; }
.tt2 { letter-spacing: .33px; }
.winbtns { margin-left: auto; display: flex; gap: 32px; padding-right: 19px; }

/* menu */
.menu { height: 30px; flex: none; display: flex; align-items: center; background: #f5f5f5; padding: 0 0 2px 7px; white-space: nowrap; position: relative; }
.menu > span { margin-right: 10px; }
.menu > .r9 { margin-right: 9px; }
.menu > .r11 { margin-right: 11px; }
.menu > .r12 { margin-right: 12px; }
.menu > .r14 { margin-right: 14px; }
.menu .mg { margin-left: 2px; }
.mitem { display: flex; align-items: center; gap: 2px; }
.mitem svg { margin-right: 2px; }
.menu .mdd { margin: 0 4px 0 0; }
.menu .xr { margin-right: 0; }
.newsbar { width: 176px; height: 29px; margin: 0 0 -2px 5px; align-self: flex-end; display: flex; align-items: center; background: #fff; border-radius: 6px 0 0 0; padding-bottom: 2px; }
.news { color: #3f6f00; padding-left: 29px; }
.menu .bean { margin-left: 135px; margin-right: 13px; }
.bell { margin-right: 36px; }
.more { font: 700 13px/14px "Liberation Sans", sans-serif; color: #222; }
.menu .topmore { margin-right: 0; align-self: flex-start; margin-top: 1px; }

/* toolbars */
.tb1 { height: 31px; flex: none; display: flex; background: #fff; gap: 3px; }
.grp { display: flex; align-items: center; height: 28px; background: linear-gradient(#fafafa, #f1f1f1); border-radius: 3px; white-space: nowrap; }
.g1 { width: 150px; padding-left: 5px; }
.g2 { width: 542px; padding-left: 4px; margin-right: 7px; }
.g3 { flex: 1; min-width: 0; }
.ti { display: inline-flex; align-items: center; gap: 3px; white-space: nowrap; }
.g5 { gap: 5px; }
.i { width: 16px; height: 16px; }
.ib { width: 14px; height: 16px; }
.off { color: #999; }
.sigma { margin-left: 9px; font: 700 15px/16px "Liberation Serif", serif; width: 10px; color: #111; }
.m3 { margin-left: 3px; } .m4 { margin-left: 4px; } .m5 { margin-left: 5px; } .m6 { margin-left: 6px; } .m7 { margin-left: 7px; } .m8 { margin-left: 8px; } .m9 { margin-left: 9px; } .m10 { margin-left: 10px; } .m13 { margin-left: 13px; } .m17 { margin-left: 17px; } .m30 { margin-left: 30px; } .m36 { margin-left: 36px; }
.mauto { margin-left: auto; margin-right: 4px; }
.dd { display: inline-block; width: 0; height: 0; border: 3px solid transparent; border-top: 4px solid #222; border-bottom: 0; flex: none; }
.sep { display: inline-block; width: 1px; height: 21px; background: #bbb; flex: none; }
.combo { width: 62px; height: 23px; display: flex; align-items: center; gap: 2px; border: 1px solid #8a8a8a; color: #888; padding-left: 2px; }
.combo .dd { margin-left: 7px; border-top-color: #777; }

.work { flex: 1; display: flex; min-height: 0; background: #f0f0f0; }
.nav { width: 254px; flex: none; display: flex; flex-direction: column; background: #f0f0f0; }
.navhead { height: 18px; flex: none; background: #0a50dc; color: #fff; display: flex; align-items: center; justify-content: space-between; font-size: 12px; letter-spacing: .1px; padding-right: 8px; }
.navctl { display: flex; align-items: center; gap: 12px; }
.navbtn { height: 21px; margin: 0 1px; flex: none; border: 1px solid #a8a8a8; background: linear-gradient(#f6f6f6, #ececec); text-align: center; line-height: 19px; }
.navbtn.b1 { margin-top: 2px; }
.navbtn.b2 { height: 22px; line-height: 20px; }
.navtools { height: 27px; flex: none; margin: 1px 1px 0; display: flex; align-items: center; padding-left: 5px; background: linear-gradient(#fdfdfd, #eee); }
.minus { margin-left: 4px; }
.navtree { height: 487px; flex: none; margin: 0 2px; border: 1px solid #9a9a9a; border-width: 0 1px 2px 2px; background: #fff; display: flex; position: relative; }
.rows { flex: 1; padding-top: 2px; overflow: hidden; }
.fold, .leaf { height: 16px; line-height: 16px; display: flex; align-items: center; position: relative; white-space: nowrap; }
.fold { padding-left: 41px; }
.leaf { padding-left: 41px; }
b { font: 400 12px/16px "Liberation Mono", monospace; letter-spacing: -1.200px; }
.chev { position: absolute; left: 8px; top: 5px; width: 6px; height: 6px; border: solid #aaa; border-width: 2px 2px 0 0; transform: rotate(45deg) scale(.9); }
.open .chev { border-color: #444; transform: rotate(135deg) scale(.9); top: 3px; left: 9px; }
.fold::after { content: ""; position: absolute; left: 17px; top: 8px; width: 5px; border-top: 1px dotted #555; }
.fi { width: 15px; height: 13px; margin: 0 6px 0 -19px; }
.li { width: 15px; height: 15px; margin-right: 6px; position: relative; z-index: 1; }
.leaf::before { content: ""; position: absolute; left: 30px; top: 0; height: 16px; border-left: 1px dotted #555; }
.leaf.last::before { height: 8px; }
.leaf::after { content: ""; position: absolute; left: 31px; top: 8px; width: 9px; border-top: 1px dotted #555; }
.anc { background: linear-gradient(#777 50%, transparent 50%) 11px 0 / 1px 2px repeat-y; }
.cur { background: linear-gradient(#d4d4d4, #d4d4d4) 39px 0 / 89px 16px no-repeat; }
.newico { margin-left: 1px; }
.newtag { position: relative; top: -4px; margin-left: 1px; font: italic 700 9px/9px "Liberation Sans", sans-serif; background: #ffe000; color: #000; padding: 0 1px; }
.scroll { width: 15px; flex: none; display: flex; flex-direction: column; background: #f0f0f0; }
.sb1 { margin: 2px 2px 2px 0; }
.sb2 { margin: 2px 0 2px 0; }
.strack { flex: 1; position: relative; display: flex; flex-direction: column; justify-content: flex-end; }
.sb1 .sthumb { height: 338px; background: #c8c8c8; }
.sb2 .sthumb { height: 86px; background: #c8c8c8; }

.content { flex: 1; min-width: 0; display: flex; flex-direction: column; padding-left: 6px; }
.tb2 { height: 26px; flex: none; display: flex; align-items: center; padding-left: 11px; margin-left: -6px; white-space: nowrap; background: linear-gradient(#fbfbfb, #f1f1f1); }
.select { width: 64px; height: 22px; margin-left: 5px; background: #fff; display: flex; align-items: center; justify-content: space-between; padding: 0 3px 0 2px; }
.panels { flex: 1; display: flex; min-height: 0; }
.list { width: 182px; flex: none; display: flex; flex-direction: column; }
.search { height: 33px; flex: none; display: flex; align-items: center; gap: 6px; padding-top: 2px; padding-left: 1px; }
.sinput { width: 156px; height: 24px; border: 1px solid #777; background: #fff; color: #888; line-height: 22px; padding-left: 2px; }
.listbox { flex: 1; display: flex; background: #fff; border: 1px solid #9a9a9a; border-width: 2px 1px 1px 1px; min-height: 0; }
.rows2 { flex: 1; min-width: 0; overflow: hidden; }
.z { height: 16px; display: flex; align-items: center; padding-left: 44px; font: 400 12px/16px "Liberation Mono", monospace; letter-spacing: -1.200px; position: relative; }
.z::before { content: ""; position: absolute; left: 30px; top: 0; height: 16px; border-left: 1px dotted #555; }
.z::after { content: ""; position: absolute; left: 31px; top: 8px; width: 10px; border-top: 1px dotted #555; }
.z .g { width: 12px; height: 12px; margin-right: 7px; margin-left: -1px; }
.zsel { width: 114px; background: linear-gradient(#0078d7, #0078d7) 40px 0 / 74px 16px no-repeat; color: #fff; }
.zsel::before { height: 8px; }

.props { flex: 1; min-width: 0; margin: 0 0 0 8px; background: #fff; border: 1px solid #9a9a9a; border-width: 0 0 1px 0; display: flex; flex-direction: column; }
.tabs { height: 22px; flex: none; background: #f4f4f4; padding: 2px 0 0 1px; border-bottom: 1px solid #ddd; }
.tab { display: block; width: 59px; height: 20px; background: #fff; border: 1px solid #d5d5d5; border-bottom: 0; text-align: center; line-height: 18px; }
.grid { margin: 6px 0 0 2px; }
.row { display: grid; grid-template-columns: 22px 191px 126px 60px; height: 19px; border-bottom: 1px solid #bcbcbc; line-height: 20px; }
.row > span { display: block; border-right: 1px solid #bcbcbc; white-space: nowrap; overflow: hidden; }
.n { background: #f5f5f5; text-align: center; font: 400 12px/21px "Liberation Mono", monospace; letter-spacing: -1px; }
.c1 { padding-left: 20px; position: relative; }
.c2 { padding-left: 2px; }
.mono { font: 400 12px/22px "Liberation Mono", monospace; letter-spacing: -1.200px; }
.blue { color: #0000ff; }
.gray { color: #999; }
.head { height: 22px; line-height: 22px; }
.head > span { background: linear-gradient(#fff, #f1f1f1); }
.row.head .hv { background: linear-gradient(#fbdc9e, #f3c26d); color: #5a006e; text-align: center; padding: 0; }
.ctr { text-align: center; padding: 0; }
.cut { padding-left: 1px; }
.cb { display: block; width: 13px; height: 13px; margin: 3px 0 0 9px; background: #fff; border: 1px solid #555; }
.row > .grp1 { display: flex; align-items: center; padding-left: 2px; }
.tog { width: 12px; height: 12px; border: 1px solid #aaa; margin-right: 5px; display: inline-flex; align-items: center; justify-content: center; font: 400 11px/9px "Liberation Sans", sans-serif; color: #111; flex: none; }
.sub { padding-left: 30px; }
.sub::before { content: ""; position: absolute; left: 8px; top: 0; height: 100%; border-left: 1px solid #bbb; }
.sub::after { content: ""; position: absolute; left: 8px; top: 9px; width: 16px; border-top: 1px solid #bbb; }
.endsub::before { height: 10px; }
.sel .n { background: #ffd591; color: #5a006e; }
.sel .c1 { background: #0078d7; color: #fff; }
.sel .c2 { background: #d5e8f8; }
.sel .c1::before, .sel .c1::after { border-color: #d5e8f8; }

/* status */
.status { height: 22px; flex: none; display: flex; background: #f0f0f0; }
.sc { display: block; height: 20px; margin: 1px 1px 0 0; border: 1px solid #dedede; background: #f4f4f4; line-height: 18px; padding-left: 1px; white-space: nowrap; }
.s0 { width: 148px; } .s1 { width: 79px; margin-right: 2px; } .s2 { width: 98px; margin-right: 2px; } .s3 { width: 48px; margin-right: 2px; padding-left: 2px; } .s4 { width: 915px; } .s5 { flex: 1; }

/* taskbar */
.taskbar { height: 40px; flex: none; display: flex; background: #081318; color: #fff; position: relative; align-items: stretch; }
.start { width: 48px; background: #000; display: flex; align-items: center; justify-content: center; }
.tsearch { width: 344px; background: #333; display: flex; align-items: center; padding-left: 10px; color: #aaa; }
.tstext { margin-left: 6px; font-size: 13px; line-height: 18px; color: #9a9a9a; }
.tmic { margin-left: auto; margin-right: 15px; }
.tk { display: flex; align-items: center; justify-content: center; position: relative; }
.w41 { width: 41px; margin-right: 2px; } .w43 { width: 43px; } .w44 { width: 44px; } .w45 { width: 45px; } .w48 { width: 48px; } .w50 { width: 50px; } .w51 { width: 51px; }
.active { background: #2b3a44; }
.under::after { content: ""; position: absolute; left: 4px; right: 4px; bottom: 0; height: 2px; background: #76b9ed; }
.active::after { left: 0; right: 0; }
.short::after { left: 2px; right: 8px; }
.tlabel { width: 44px; text-align: center; line-height: 40px; color: #ddd; }
.tcpu { width: 72px; display: flex; flex-direction: column; align-items: center; line-height: 17px; padding-top: 3px; }
.tray { width: 212px; display: flex; align-items: center; }
.t1 { margin-left: 8px; } .t2 { margin-left: 16px; } .t3 { margin-left: 9px; } .t4 { margin-left: 9px; } .t5 { margin-left: 7px; } .t6 { margin-left: 12px; }
.t7 { margin-left: 8px; } .t8 { margin-left: 13px; }
.clock { width: 88px; display: flex; flex-direction: column; align-items: center; line-height: 20px; }
.notify { flex: 1; position: relative; display: flex; align-items: center; padding-left: 6px; }
.ncount { position: absolute; left: 13px; top: 18px; width: 16px; height: 16px; border-radius: 50%; background: #333; border: 1px solid #888; color: #fff; font: 700 11px/14px "Liberation Sans", sans-serif; text-align: center; }

/* dialog */
.dlg { position: absolute; left: 812px; top: 131px; width: 526px; height: 572px; background: linear-gradient(#b8c9da, #d7e3f0 34px, #dbe5f1); border: 1px solid #555; border-top: 2px solid #555; padding: 0 3px 6px 7px; display: flex; flex-direction: column; }
.dlgtitle { height: 31px; flex: none; line-height: 36px; color: #999; }
.dlgbody { flex: 1; background: #fff; border: 1px solid #eee; padding: 5px 1px 0 4px; display: flex; flex-direction: column; min-height: 0; }
.dtb { height: 27px; flex: none; display: flex; align-items: center; background: #f3f3f3; padding-left: 6px; white-space: nowrap; }
.d1 { width: 493px; margin-bottom: 2px; }
.d2 { width: 162px; height: 26px; }
.dsel { width: 49px; height: 26px; margin-left: 5px; background: #fff; display: flex; align-items: center; justify-content: space-between; padding: 0 3px 0 2px; font-family: "Liberation Sans", sans-serif; letter-spacing: .4px; }
.tog2 { display: inline-flex; align-items: center; gap: 4px; height: 23px; border: 1px solid #0a7ad0; background: #e5f1fb; }
.sel2 { width: 51px; margin-left: 1px; padding-left: 5px; gap: 2px; }
.cur2 { width: 13px; height: 17px; }
.plain { width: 35px; margin-left: 1px; justify-content: center; }
.canvas { height: 413px; width: 507px; margin-top: 1px; flex: none; border: 2px solid #f00; }
.draw { width: 503px; height: 409px; }
.hund text { font: 400 11px "Liberation Sans", sans-serif; fill: #3f444c; text-anchor: middle; }
.dimt { font: 400 9px "Liberation Sans", sans-serif; fill: #e8eef5; text-anchor: middle; }
.dfoot { height: 25px; margin-top: 2px; flex: none; display: flex; align-items: center; white-space: nowrap; }
.or { width: 51px; height: 24px; padding-left: 2px; gap: 2px; margin-left: 1px; }
.i18 { width: 18px; height: 18px; }
.dti { display: inline-flex; align-items: center; gap: 3px; height: 25px; padding: 0 3px; background: #f3f3f3; }
.dstatus { height: 25px; flex: none; margin-top: 3px; display: flex; gap: 3px; }
.ds1, .ds2 { display: block; background: #f0f0f0; border: 1px solid #e2e2e2; line-height: 23px; white-space: nowrap; }
.ds1 { width: 96px; padding-left: 3px; font: 400 10.500px/23px "Liberation Sans", sans-serif; }
.ds2 { flex: 1; padding-left: 1px; display: flex; }
.grip { margin: auto 1px 1px auto; }

.markup { position: absolute; left: 0; top: 0; pointer-events: none; }

/* IME bar */
.sogou { position: absolute; left: 692px; top: 12px; display: flex; align-items: center; }
.sglogo { position: relative; z-index: 1; }
.sgbar { width: 178px; height: 24px; display: flex; align-items: center; gap: 7.500px; padding-left: 5px; background: #f3f7fb; border: 1px solid #9fb4c9; }
.sgz { color: #1c6fd0; font-weight: 700; font-size: 13px; line-height: 16px; }
.sgd { color: #1c6fd0; font-weight: 700; width: 13px; margin-left: 2.500px; }

/* network widget */
.ball { position: absolute; left: 1132px; top: -28px; width: 46px; height: 46px; border-radius: 50%; background: #3fb24a; border: 2px solid #d5e5d8; box-shadow: 0 1px 3px rgba(0,0,0,.4); color: #fff; text-align: center; font: 700 11px/64px "Liberation Sans", sans-serif; }
.netw { position: absolute; left: 1110px; top: 20px; width: 122px; height: 52px; border-radius: 26px; background: #fff; box-shadow: 0 2px 6px rgba(0,0,0,.35); display: flex; align-items: center; padding-left: 6px; }
.wifi { width: 40px; height: 40px; border-radius: 50%; background: #26b968; display: flex; align-items: center; justify-content: center; }
.netinfo { display: flex; flex-direction: column; gap: 4px; margin-left: 6px; }
.nrow { display: flex; align-items: center; gap: 4px; color: #7a8a90; font: 400 11px/16px "Liberation Sans", sans-serif; }
```
